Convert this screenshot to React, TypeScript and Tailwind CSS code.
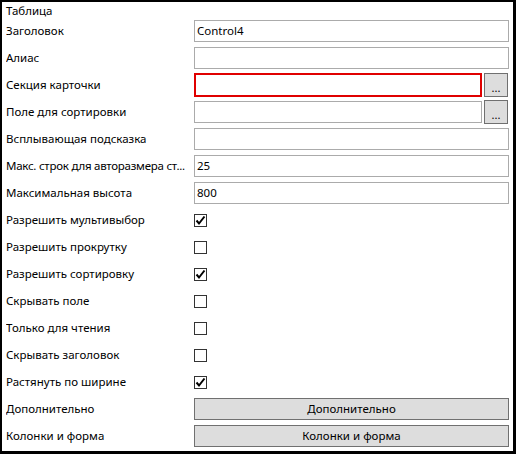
import React from "react";

const font = { fontFamily: '"Noto Sans", "Open Sans", sans-serif' };

function Check({ checked }: { checked: boolean }) {
  return (
    <div className="w-[13px] h-[13px] border border-[#333333] bg-white flex items-center justify-center">
      {checked && (
        <svg width="11" height="11" viewBox="0 0 11 11">
          <path d="M1.5 5.5 L4 8.5 L9.5 1.5" fill="none" stroke="#000" strokeWidth="2" />
        </svg>
      )}
    </div>
  );
}

function TextInput({ value = "", red = false }: { value?: string; red?: boolean }) {
  return (
    <div
      className={
        "flex-1 bg-white flex items-center px-[2px] text-[11.5px] text-black " +
        (red ? "border-2 border-[#e00000] h-[24px] -my-px" : "border border-[#ababab] h-[22px]")
      }
    >
      {value}
    </div>
  );
}

function Ellipsis() {
  return (
    <div className="w-[24px] h-[24px] -my-px ml-[2px] mr-[1px] bg-[#dddddd] border border-[#707070] flex items-end justify-center text-[11px] leading-[16px] text-black">
      ...
    </div>
  );
}

function Btn({ label }: { label: string }) {
  return (
    <div className="flex-1 h-[22px] bg-[#dddddd] border border-[#707070] flex items-center justify-center text-[11.5px] text-black">
      {label}
    </div>
  );
}

type Row =
  | { label: string; kind: "text"; value?: string; tight?: boolean }
  | { label: string; kind: "pick"; red?: boolean }
  | { label: string; kind: "check"; checked: boolean }
  | { label: string; kind: "btn" };

const rows: Row[] = [
  { label: "Заголовок", kind: "text", value: "Control4" },
  { label: "Алиас", kind: "text" },
  { label: "Секция карточки", kind: "pick", red: true },
  { label: "Поле для сортировки", kind: "pick" },
  { label: "Всплывающая подсказка", kind: "text" },
  { label: "Макс. строк для авторазмера ст...", kind: "text", value: "25", tight: true },
  { label: "Максимальная высота", kind: "text", value: "800" },
  { label: "Разрешить мультивыбор", kind: "check", checked: true },
  { label: "Разрешить прокрутку", kind: "check", checked: false },
  { label: "Разрешить сортировку", kind: "check", checked: true },
  { label: "Скрывать поле", kind: "check", checked: false },
  { label: "Только для чтения", kind: "check", checked: false },
  { label: "Скрывать заголовок", kind: "check", checked: false },
  { label: "Растянуть по ширине", kind: "check", checked: true },
  { label: "Дополнительно", kind: "btn" },
  { label: "Колонки и форма", kind: "btn" },
];

export default function App() {
  return (
    <div
      style={font}
      className="w-[516px] h-[454px] bg-white border-t-2 border-l-2 border-r-[3px] border-b-[3px] border-black pl-[4px] pr-[4px] text-[11.5px] text-black overflow-hidden"
    >
      <div className="h-[18px] leading-[17px]">Таблица</div>
      <div className="flex flex-col gap-[5px]">
        {rows.map((r, i) => (
          <div key={i} className="flex items-center h-[22px]">
            <div
              className={
                "w-[188px] pr-[1px] whitespace-nowrap overflow-hidden leading-[22px] " +
                (r.kind === "text" && r.tight ? "tracking-[-0.25px]" : "")
              }
            >
              {r.label}
            </div>
            <div className="flex-1 flex items-center">
              {r.kind === "text" && <TextInput value={r.value} />}
              {r.kind === "pick" && (
                <>
                  <TextInput red={r.red} />
                  <Ellipsis />
                </>
              )}
              {r.kind === "check" && <Check checked={r.checked} />}
              {r.kind === "btn" && <Btn label={r.label} />}
            </div>
          </div>
        ))}
      </div>
    </div>
  );
}
